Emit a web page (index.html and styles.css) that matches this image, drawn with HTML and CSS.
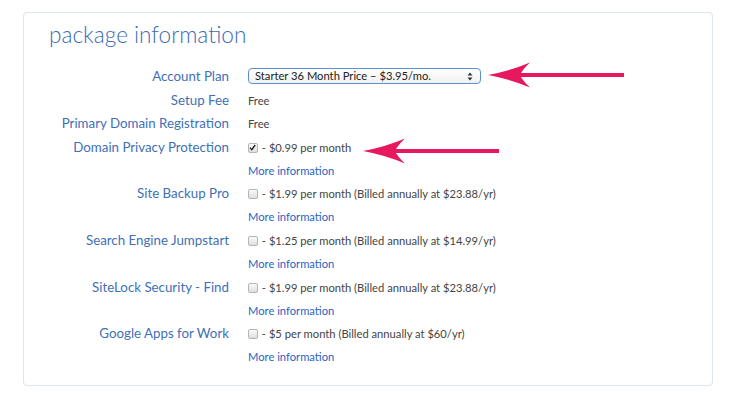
FILE: index.html
```html
<!DOCTYPE html>
<html lang="en">
<head>
    <meta charset="UTF-8">
    <meta name="viewport" content="width=device-width, initial-scale=1.0">
    <title>Package Information</title>
    <link rel="stylesheet" href="styles.css">
</head>
<body>
    <div class="card">
        <h1>package information</h1>

        <div class="form-grid">
            <div class="label">Account Plan</div>
            <div class="value">
                <div class="select-box">
                    <span>Starter 36 Month Price – $3.95/mo.</span>
                    <svg class="select-arrows" width="6" height="9" viewBox="0 0 6 9">
                        <path d="M0.5 3.5 L3 0.5 L5.5 3.5Z M0.5 5.5 L3 8.5 L5.5 5.5Z" fill="#333"/>
                    </svg>
                </div>
            </div>

            <div class="label">Setup Fee</div>
            <div class="value">Free</div>

            <div class="label">Primary Domain Registration</div>
            <div class="value">Free</div>

            <div class="label">Domain Privacy Protection</div>
            <div class="value">
                <span class="check checked">
                    <svg width="9" height="9" viewBox="0 0 9 9"><path d="M2 4.6 L3.8 6.6 L7.2 2" fill="none" stroke="#222" stroke-width="1.4"/></svg>
                </span> - $0.99 per month
                <a href="#" class="more">More information</a>
            </div>

            <div class="label">Site Backup Pro</div>
            <div class="value">
                <span class="check"></span> - $1.99 per month (Billed annually at $23.88/yr)
                <a href="#" class="more">More information</a>
            </div>

            <div class="label">Search Engine Jumpstart</div>
            <div class="value">
                <span class="check"></span> - $1.25 per month (Billed annually at $14.99/yr)
                <a href="#" class="more">More information</a>
            </div>

            <div class="label">SiteLock Security - Find</div>
            <div class="value">
                <span class="check"></span> - $1.99 per month (Billed annually at $23.88/yr)
                <a href="#" class="more">More information</a>
            </div>

            <div class="label">Google Apps for Work</div>
            <div class="value">
                <span class="check"></span> - $5 per month (Billed annually at $60/yr)
                <a href="#" class="more">More information</a>
            </div>
        </div>

        <!-- annotation arrows drawn over the form -->
        <svg class="arrow arrow-plan" width="136" height="26" viewBox="0 0 136 26">
            <rect x="30" y="11" width="106" height="4" fill="#e8185f"/>
            <path d="M0 13 Q22 9 42 0.5 Q34 8 32 13 Q34 18 42 25.5 Q22 17 0 13Z" fill="#e8185f"/>
        </svg>
        <svg class="arrow arrow-privacy" width="136" height="26" viewBox="0 0 136 26">
            <rect x="30" y="11" width="106" height="4" fill="#e8185f"/>
            <path d="M0 13 Q22 9 42 0.5 Q34 8 32 13 Q34 18 42 25.5 Q22 17 0 13Z" fill="#e8185f"/>
        </svg>
    </div>
</body>
</html>
```

FILE: styles.css
```css
body {
    margin: 0;
    background-color: #ffffff;
    font-family: Lato, "Open Sans", Arial, sans-serif;
    color: #444;
}
.card {
    position: relative;
    width: 690px;
    box-sizing: border-box;
    margin: 12px 0 0 23px;
    padding: 7px 0 17px 25px;
    border: 1px solid #dce4ec;
    border-radius: 4px;
}
h1 {
    margin: 0 0 15px 0;
    font-size: 22.6px;
    font-weight: 300;
    line-height: 30px;
    color: #3a6cb4;
}
.form-grid {
    display: grid;
    grid-template-columns: 180px 1fr;
    column-gap: 19px;
    row-gap: 0.6px;
}
.label {
    text-align: right;
    font-size: 13.3px;
    line-height: 23px;
    color: #4170b6;
}
.value {
    font-size: 11.2px;
    line-height: 23px;
    color: #444;
}
.more {
    display: block;
    color: #2a63c3;
    text-decoration: none;
    font-size: 11.2px;
}
.check {
    display: inline-block;
    width: 8px;
    height: 8px;
    border: 1px solid #b5b5b5;
    border-radius: 2px;
    background: linear-gradient(#fafafa, #dedede);
    vertical-align: -1px;
    margin-right: 1px;
    position: relative;
}
.check svg {
    position: absolute;
    left: -1px;
    top: -1px;
}
.select-box {
    display: flex;
    align-items: center;
    justify-content: space-between;
    width: 233px;
    height: 16px;
    box-sizing: border-box;
    margin-top: 3px;
    padding: 0 7px 0 6px;
    border: 1px solid #5d8fd8;
    border-radius: 4px;
    background: linear-gradient(#ffffff, #f1f1f1);
    font-size: 11.2px;
    font-weight: 400;
    color: #222;
    line-height: 14px;
}
.arrow {
    position: absolute;
}
.arrow-plan {
    left: 464px;
    top: 49px;
}
.arrow-privacy {
    left: 339px;
    top: 125px;
}
```
